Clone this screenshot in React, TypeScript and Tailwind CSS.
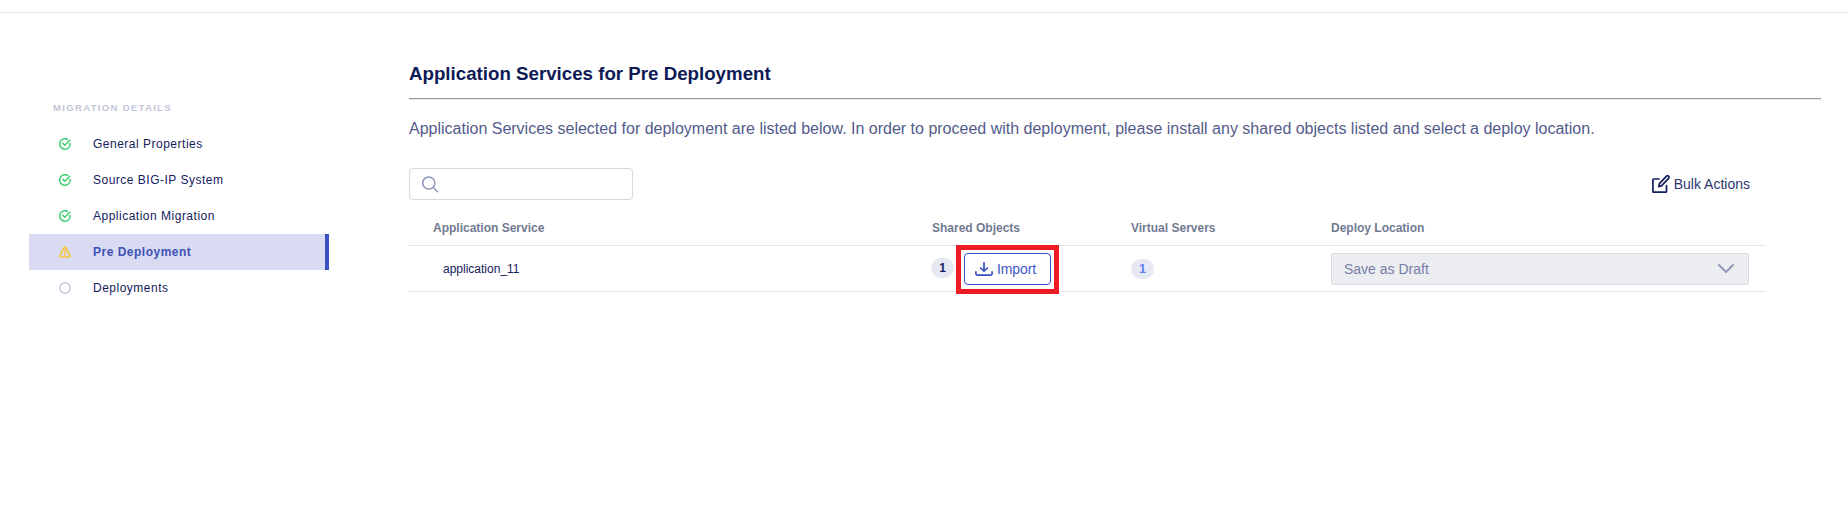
import React from "react";

function CheckIcon() {
  return (
    <svg width="12" height="12" viewBox="0 0 12 12" fill="none" stroke="#3fcf74" strokeWidth="1.5" strokeLinecap="round" strokeLinejoin="round">
      <path d="M11.2 5.5A5.25 5.25 0 1 1 8.6 1.4" />
      <path d="M4 5.4 5.8 7.2 10.8 2.2" />
    </svg>
  );
}

function WarningIcon() {
  return (
    <svg width="12" height="12" viewBox="0 0 12 12" fill="none" stroke="#f8c73c" strokeWidth="1.6" strokeLinecap="round" strokeLinejoin="round">
      <path d="M5.2 1.5.9 9.6a.9.9 0 0 0 .8 1.4h8.6a.9.9 0 0 0 .8-1.4L6.8 1.5a.9.9 0 0 0-1.6 0Z" />
      <path d="M6 4.4v2.8M6 8.9v.3" />
    </svg>
  );
}

function CircleIcon() {
  return (
    <svg width="12" height="12" viewBox="0 0 12 12" fill="none" stroke="#c6c9dc" strokeWidth="1.5">
      <circle cx="6" cy="6" r="5.2" />
    </svg>
  );
}

function SearchIcon() {
  return (
    <svg width="17" height="17" viewBox="0 0 17 17" fill="none" stroke="#8f96b8" strokeWidth="1.5" strokeLinecap="round">
      <circle cx="6.8" cy="7" r="6.1" />
      <path d="m11.3 11.5 4.2 4.2" />
    </svg>
  );
}

function ImportIcon() {
  return (
    <svg width="18" height="14" viewBox="0 0 18 14" fill="none" stroke="#3a50c4" strokeWidth="1.7" strokeLinecap="round" strokeLinejoin="round">
      <path d="M9 .8v7.6M5.6 6 9 9.2 12.4 6" />
      <path d="M.9 9.8v2c0 .9.5 1.3 1.3 1.3h13.6c.8 0 1.3-.4 1.3-1.3v-2" />
    </svg>
  );
}

function EditIcon() {
  return (
    <svg width="18" height="18" viewBox="0 0 18 18" fill="none" stroke="#14205c" strokeWidth="1.7" strokeLinecap="round" strokeLinejoin="round">
      <path d="M7 4H1.6a.7.7 0 0 0-.7.7v11.7c0 .4.3.7.7.7h12.2c.4 0 .7-.3.7-.7V10.5" />
      <path d="m7.4 8.6 6.9-7.3a1.5 1.5 0 0 1 2.3 2l-6.9 7.3-2.9 1Z" />
    </svg>
  );
}

function ChevronIcon() {
  return (
    <svg width="16" height="9" viewBox="0 0 16 9" fill="none" stroke="#8f96b8" strokeWidth="1.8" strokeLinecap="round" strokeLinejoin="round">
      <path d="m1 1 7 7 7-7" />
    </svg>
  );
}

const steps = [
  { label: "General Properties", icon: <CheckIcon /> },
  { label: "Source BIG-IP System", icon: <CheckIcon /> },
  { label: "Application Migration", icon: <CheckIcon /> },
  { label: "Pre Deployment", icon: <WarningIcon />, active: true },
  { label: "Deployments", icon: <CircleIcon /> },
];

function Sidebar() {
  return (
    <aside className="ml-[29px] w-[300px] shrink-0 pt-[86px]">
      <h2 className="mb-[10px] pl-[24px] text-[9.6px] leading-[17px] font-bold tracking-[1.28px] text-[#c2c6d8]">MIGRATION DETAILS</h2>
      <nav>
        {steps.map((s) => (
          <a
            key={s.label}
            className={
              s.active
                ? "flex h-9 items-center gap-[22px] border-r-4 border-[#3a50c4] bg-[#d8dbf1] pl-[30px] text-[12px] font-bold tracking-[0.5px] text-[#3f51b5]"
                : "flex h-9 items-center gap-[22px] pl-[30px] text-[12px] tracking-[0.5px] text-[#14205c]"
            }
          >
            {s.icon}
            <span>{s.label}</span>
          </a>
        ))}
      </nav>
    </aside>
  );
}

export default function App() {
  return (
    <div className="h-[526px] w-[1848px] overflow-hidden bg-white pt-3 font-['Liberation_Sans',Arial,sans-serif]">
      <div className="flex border-t border-[#e4e4f5]">
        <Sidebar />
        <main className="ml-20 w-[1412px] shrink-0 pt-[48px]">
          <h1 className="h-[37px] text-[18.72px] leading-[25px] font-bold whitespace-nowrap text-[#0e1a56]">Application Services for Pre Deployment</h1>
          <hr className="h-[2px] border-t border-b border-t-[#969696] border-b-[#e8e8e8]" />
          <p className="mt-[17px] text-[16px] leading-6 whitespace-nowrap text-[#535b8b]">
            Application Services selected for deployment are listed below. In order to proceed with deployment, please install any shared objects listed and select a deploy location.
          </p>
          <div className="mt-[27px] flex h-8 w-[1341px] items-center justify-between">
            <div className="flex h-8 w-[224px] items-center rounded-[4px] border border-[#d5d7e3] pl-3">
              <SearchIcon />
            </div>
            <button className="flex items-center gap-[4px] text-[14px] text-[#2c3670]">
              <EditIcon />
              <span>Bulk Actions</span>
            </button>
          </div>
          <section className="w-[1357px]">
            <div className="grid h-[46px] grid-cols-[522px_200px_200px_1fr] items-center border-b border-[#e5e6eb] pt-[10px] text-[12px] font-bold text-[#717a92]">
              <span className="pl-[24px]">Application Service</span>
              <span className="pl-px">Shared Objects</span>
              <span>Virtual Servers</span>
              <span>Deploy Location</span>
            </div>
            <div className="grid h-[46px] grid-cols-[522px_200px_200px_1fr] items-center border-b border-[#e5e6eb] text-[12px] text-[#14205c]">
              <span className="pl-[34px]">application_11</span>
              <div className="flex items-center">
                <span className="mb-px flex h-5 w-[23px] items-center justify-center rounded-full bg-[#e6e8f4] font-bold">1</span>
                <div className="-mt-[7px] -mb-[9px] ml-[2px] flex h-[49px] w-[103px] items-start justify-center border-[5px] border-[#ed1c24] pt-[3px]">
                  <button className="flex h-8 w-[87px] items-center gap-[4px] rounded-[4px] border border-[#3a50c4] bg-white pl-[10px] text-[14px] text-[#4255c4]">
                    <ImportIcon />
                    <span className="pt-px tracking-[-0.1px]">Import</span>
                  </button>
                </div>
              </div>
              <span className="flex h-5 w-[23px] items-center justify-center rounded-full bg-[#e6e8f4] font-bold text-[#5f7df5]">1</span>
              <div className="flex h-8 w-[418px] items-center justify-between rounded-[3px] border border-[#d8dae2] bg-[#ecedf1] pr-[14px] pl-[12px] text-[14px] text-[#757da6]">
                <span className="pt-px">Save as Draft</span>
                <ChevronIcon />
              </div>
            </div>
          </section>
        </main>
      </div>
    </div>
  );
}
